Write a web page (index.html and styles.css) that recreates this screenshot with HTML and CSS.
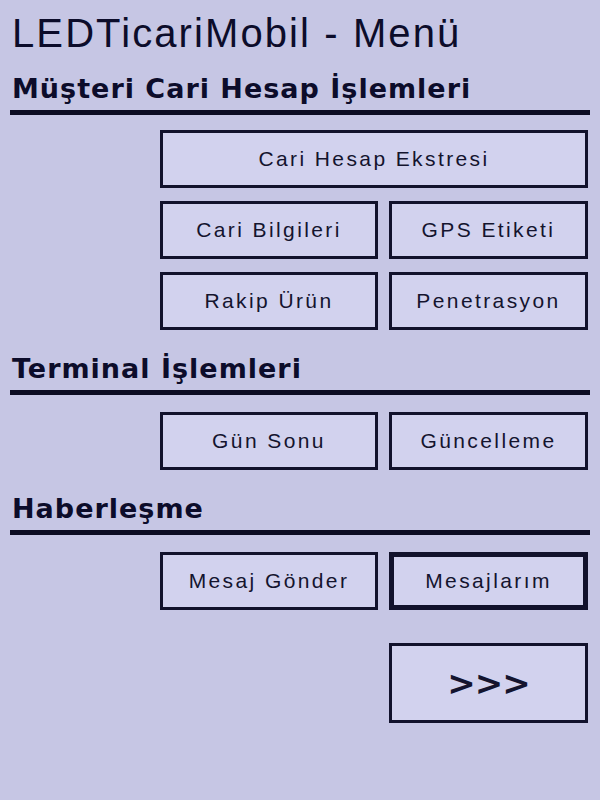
FILE: index.html
```html
<!DOCTYPE html>
<html lang="tr">
<head>
<meta charset="utf-8">
<title>LEDTicariMobil - Menü</title>
<link rel="stylesheet" href="styles.css">
</head>
<body>
<div class="screen">
  <h1 class="title">LEDTicariMobil - Menü</h1>

  <section class="section first">
    <h2 class="heading">Müşteri Cari Hesap İşlemleri</h2>
    <div class="grid">
      <button class="btn wide">Cari Hesap Ekstresi</button>
      <button class="btn">Cari Bilgileri</button>
      <button class="btn">GPS Etiketi</button>
      <button class="btn">Rakip Ürün</button>
      <button class="btn">Penetrasyon</button>
    </div>
  </section>

  <section class="section">
    <h2 class="heading">Terminal İşlemleri</h2>
    <div class="grid">
      <button class="btn">Gün Sonu</button>
      <button class="btn">Güncelleme</button>
    </div>
  </section>

  <section class="section">
    <h2 class="heading">Haberleşme</h2>
    <div class="grid">
      <button class="btn">Mesaj Gönder</button>
      <button class="btn focused">Mesajlarım</button>
    </div>
  </section>

  <div class="grid next-row">
    <button class="btn next">&gt;&gt;&gt;</button>
  </div>
</div>
</body>
</html>
```

FILE: styles.css
```css
html, body {
  margin: 0;
  padding: 0;
  background: #c6c6e4;
}

.screen {
  width: 600px;
  height: 800px;
  box-sizing: border-box;
  padding: 10px 10px 0 10px;
  color: #0c0c2a;
  font-family: "Liberation Sans", Arial, sans-serif;
}

.title {
  margin: 0 0 0 2px;
  font-size: 40px;
  line-height: 46px;
  font-weight: normal;
  letter-spacing: 2.1px;
  white-space: nowrap;
}

.section {
  margin-top: 24px;
}

.section.first {
  margin-top: 18px;
}

.heading {
  margin: 0;
  padding: 0 0 6px 2px;
  border-bottom: 5px solid #0c0c22;
  font-family: "DejaVu Sans", sans-serif;
  font-weight: bold;
  font-size: 27px;
  line-height: 30px;
  letter-spacing: 1px;
  white-space: nowrap;
}

.grid {
  display: grid;
  grid-template-columns: 218px 199px;
  column-gap: 11px;
  row-gap: 13px;
  margin: 17px 0 0 150px;
}

.section.first .grid {
  margin-top: 15px;
}

.btn {
  height: 58px;
  margin: 0;
  padding: 0;
  box-sizing: border-box;
  background: #d2d2ee;
  border: 3px solid #12122c;
  border-radius: 0;
  color: #14142e;
  font-family: "Liberation Sans", Arial, sans-serif;
  font-size: 21px;
  letter-spacing: 2.4px;
  white-space: nowrap;
}

.btn.wide {
  grid-column: 1 / 3;
}

.btn.focused {
  border-width: 5px;
}

.next-row {
  margin-top: 33px;
}

.btn.next {
  grid-column: 2;
  height: 80px;
  font-family: "DejaVu Sans", sans-serif;
  font-weight: bold;
  font-size: 34px;
  letter-spacing: -1px;
}
```
